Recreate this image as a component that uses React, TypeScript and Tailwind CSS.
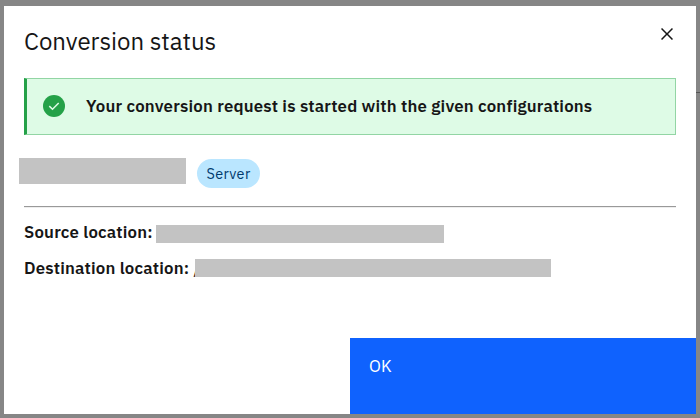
import React from "react";

function Redacted({ className }: { className: string }) {
  return <span aria-hidden="true" className={`relative block shrink-0 bg-[#c3c3c3] ${className}`} />;
}

function CloseIcon() {
  return (
    <svg viewBox="0 0 32 32" className="block size-6" fill="#161616">
      <path d="M24 9.4 22.6 8 16 14.6 9.4 8 8 9.4 14.6 16 8 22.6 9.4 24 16 17.4 22.6 24 24 22.6 17.4 16z" />
    </svg>
  );
}

function SuccessIcon() {
  return (
    <svg viewBox="0 0 22 22" className="block size-[22px] shrink-0">
      <circle cx="11" cy="11" r="11" fill="#24a148" />
      <path d="M6.3 11.1 9.5 14.2 15.7 8" fill="none" stroke="#defbe6" strokeWidth="1.5" />
    </svg>
  );
}

export default function App() {
  return (
    <div className="flex h-[418px] w-[700px] bg-[#868686] pt-1.5 pr-0 pb-1 pl-1 font-['IBM_Plex_Sans','Roboto',sans-serif] text-[#161616]">
      <section role="dialog" className="flex h-[408px] w-[692px] flex-col bg-white">
        <header className="flex h-[72px] items-start justify-between pr-[17px] pl-5">
          <h1 className="pt-[19px] text-2xl leading-8 font-normal whitespace-nowrap">Conversion status</h1>
          <button aria-label="Close" className="mt-4">
            <CloseIcon />
          </button>
        </header>

        <div className="mx-5 flex h-[57px] shrink-0 items-start border border-l-3 border-[#92d5a4] border-l-[#24a148] bg-[#defbe6] pt-4 pl-4">
          <SuccessIcon />
          <p className="-mt-px ml-[21px] text-[16.8px] leading-6 font-semibold tracking-[0.192px] whitespace-nowrap">
            Your conversion request is started with the given configurations
          </p>
        </div>

        <div className="mt-[23px] flex h-[30px] shrink-0 items-start pl-[15px]">
          <Redacted className="h-[26px] w-[167px]" />
          <span className="mt-px ml-[11px] flex h-[29px] w-[63px] items-center justify-center rounded-full bg-[#bae6ff] pt-px text-[14.4px] tracking-[0.384px] text-[#003a6d]">
            Server
          </span>
        </div>

        <hr className="mx-5 mt-[18px] h-[2px] shrink-0 border-t border-b border-t-[#999999] border-b-[#eeeeee]" />

        <div className="mt-[11px] flex h-[36px] shrink-0 items-start pl-5">
          <span className="w-[132px] text-[16.8px] leading-[26px] font-semibold tracking-[0.192px] whitespace-nowrap">Source location:</span>
          <Redacted className="mt-[6px] h-[18px] w-[288px]" />
        </div>
        <div className="flex h-[36px] shrink-0 items-start pl-5">
          <span className="w-[169.5px] text-[16.8px] leading-[26px] font-semibold tracking-[0.192px] whitespace-nowrap">Destination location:</span>
          <span className="mt-px w-[1.5px] text-[16.8px] leading-[26px]">/</span>
          <Redacted className="mt-1 h-[18px] w-[356px]" />
        </div>

        <footer className="mt-auto flex h-[76px] shrink-0 justify-end">
          <button className="flex w-[346px] items-start bg-[#0f62fe] pt-4 pl-[19px] text-[16.8px] leading-6 tracking-[0.192px] text-white">OK</button>
        </footer>
      </section>
      <div className="flex w-1 flex-col pt-[86px]">
        <div className="h-px bg-[#555555]" />
      </div>
    </div>
  );
}
